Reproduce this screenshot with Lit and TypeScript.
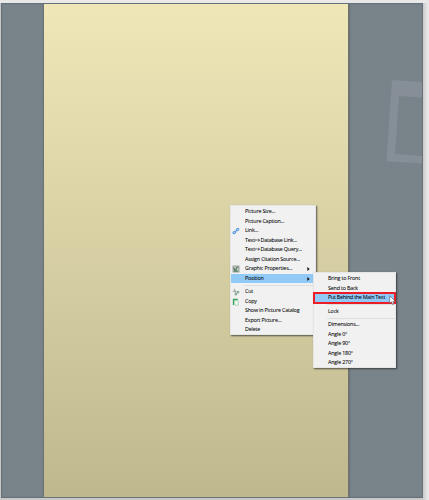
import { LitElement, html, css, svg, nothing } from "lit";
import { customElement, property } from "lit/decorators.js";
import { classMap } from "lit/directives/class-map.js";

interface Item {
  label?: string;
  icon?: string;
  sub?: boolean;
  active?: boolean;
  framed?: boolean;
  sep?: boolean;
}

const MAIN: Item[] = [
  { label: "Picture Size..." },
  { label: "Picture Caption..." },
  { label: "Link...", icon: "link" },
  { label: "Text ⇨ Database Link..." },
  { label: "Text ⇨ Database Query..." },
  { label: "Assign Citation Source..." },
  { label: "Graphic Properties...", icon: "graphic", sub: true },
  { label: "Position", sub: true, active: true },
  { sep: true },
  { label: "Cut", icon: "cut" },
  { label: "Copy", icon: "copy" },
  { label: "Show in Picture Catalog" },
  { label: "Export Picture..." },
  { label: "Delete" },
];

const POSITION: Item[] = [
  { label: "Bring to Front" },
  { label: "Send to Back" },
  { label: "Put Behind the Main Text", active: true, framed: true },
  { sep: true },
  { label: "Lock" },
  { sep: true },
  { label: "Dimensions..." },
  { label: "Angle 0°" },
  { label: "Angle 90°" },
  { label: "Angle 180°" },
  { label: "Angle 270°" },
];

const ICONS: Record<string, unknown> = {
  link: svg`<g fill="#c5dcf4" stroke="#5797dc" stroke-width="1"><rect x="-1.5" y="-.9" width="3" height="1.8" rx=".8" transform="translate(2.4 5.4) rotate(-42)"/><rect x="-1.5" y="-.9" width="3" height="1.8" rx=".8" transform="translate(5.5 2.6) rotate(-42)"/></g>`,
  graphic: svg`<rect x=".9" y=".9" width="6.2" height="6.2" fill="#b4c4b6" stroke="#8d958f" stroke-width=".6"/><path d="M1.6 2.4 3 5.8 5.2 2 6.4 2.4" fill="none" stroke="#4a5a51" stroke-width=".9"/><path d="M1.2 6.8 4 4.8l2.8 2z" fill="#5b8467"/>`,
  cut: svg`<path d="M2.4.8 3.3 4.2M.8 3.2 4.6 4" stroke="#8d9692" stroke-width=".9"/><circle cx="6" cy="4.2" r=".9" fill="none" stroke="#4f8a69" stroke-width=".8"/><circle cx="3.8" cy="6.2" r=".9" fill="none" stroke="#4f8a69" stroke-width=".8"/>`,
  copy: svg`<path d="M1.5 7V1.5h4.2" fill="none" stroke="#35a25b" stroke-width="1.3"/><path d="M2.9 2.7h3.3v4.5H2.9z" fill="#fff" stroke="#8cc9a1" stroke-width=".7"/>`,
};

@customElement("context-menu")
class ContextMenu extends LitElement {
  @property({ attribute: false }) items: Item[] = [];

  static styles = css`
    :host {
      display: block;
      box-sizing: border-box;
      background: #f1f1f1;
      border: 1px solid #e6e6e6;
      box-shadow: 1px 1px 1.5px rgba(40, 40, 40, 0.75);
      font: 5.35px/9.55px "Open Sans", "Noto Sans", sans-serif;
      letter-spacing: -0.18px;
      color: #000;
      -webkit-text-stroke: 0.06px #000;
    }
    .row {
      display: grid;
      grid-template-columns: 14px 1fr 8px;
      align-items: center;
      height: 9.55px;
      white-space: nowrap;
    }
    .active { background: #91c9f7; }
    .framed { position: relative; outline: 2px solid #ec1c26; outline-offset: -1px; letter-spacing: -0.24px; }
    .big { font-size: 6.2px; line-height: 1px; margin: 0 -0.8px; -webkit-text-stroke: 0.12px #000; }
    .icon { width: 8px; height: 8px; margin-left: 1px; display: block; }
    .arrow { width: 3px; height: 4px; display: block; }
    .sep { display: flex; align-items: center; height: 3.9px; padding-left: 13px; }
    .line { height: 1px; flex: 1; background: #dedede; }
  `;

  private text(label = "") {
    const [before, after] = label.split("⇨");
    return after === undefined ? label : html`${before}<span class="big">⇨</span>${after}`;
  }

  render() {
    return this.items.map((i) =>
      i.sep
        ? html`<div class="sep"><span class="line"></span></div>`
        : html`<div class=${classMap({ row: true, active: !!i.active, framed: !!i.framed })}>
            <span>${i.icon ? html`<svg class="icon" viewBox="0 0 8 8">${ICONS[i.icon]}</svg>` : nothing}</span>
            <span>${this.text(i.label)}</span>
            ${i.sub ? html`<svg class="arrow" viewBox="0 0 3 4"><path d="M.3 0 2.7 2 .3 4z" fill="#111" /></svg>` : nothing}
          </div>`,
    );
  }
}

@customElement("app-root")
class AppRoot extends LitElement {
  static styles = css`
    :host {
      display: block;
      position: relative;
      box-sizing: border-box;
      width: 429px;
      height: 500px;
      padding: 3px 5px 2px 1px;
      background: linear-gradient(90deg, #c9c8c8 423px, #d2d2d2 424px, #e9e9e9 428px);
      overflow: hidden;
    }
    .top { position: absolute; inset: 0 0 auto 0; height: 3px; background: #e9e9e9; }
    .window {
      position: relative;
      display: grid;
      grid-template-columns: 41px 307px 1fr;
      box-sizing: border-box;
      width: 422px;
      height: 495px;
      border: 1px solid #687278;
      background: #78848a;
      overflow: hidden;
    }
    .side { border: 1px solid #738087; }
    .page {
      background: linear-gradient(#efe7b8, #bfb88f);
      border: solid #6c7372;
      border-width: 0 2px 0 1px;
    }
    .mark { position: absolute; left: 383px; top: 72px; width: 40px; height: 95px; }
    .menu { position: absolute; left: 230px; top: 205px; width: 86px; height: 130px; padding-top: 1px; }
    .submenu { position: absolute; left: 313px; top: 272px; width: 83px; height: 96px; padding-top: 1px; }
    .cursor { position: absolute; left: 389px; top: 295px; width: 7px; height: 10px; }
  `;

  render() {
    return html`
      <div class="top"></div>
      <div class="window">
        <div class="side"></div>
        <div class="page"></div>
        <div class="side"></div>
        <svg class="mark" viewBox="0 0 40 95">
          <path d="M7 4 40 6.2V21.7L14 20 10 78 40 80.2V87.8L1.5 85.3z" fill="#868f97" />
        </svg>
      </div>
      <context-menu class="menu" .items=${MAIN}></context-menu>
      <context-menu class="submenu" .items=${POSITION}></context-menu>
      <svg class="cursor" viewBox="0 0 7 10">
        <path d="M.7.7v7.6l1.7-1.5L3.7 9.6l1.3-.6L3.9 6.4h2.4z" fill="#fff" stroke="#4a515b" stroke-width=".6" />
      </svg>
    `;
  }
}
